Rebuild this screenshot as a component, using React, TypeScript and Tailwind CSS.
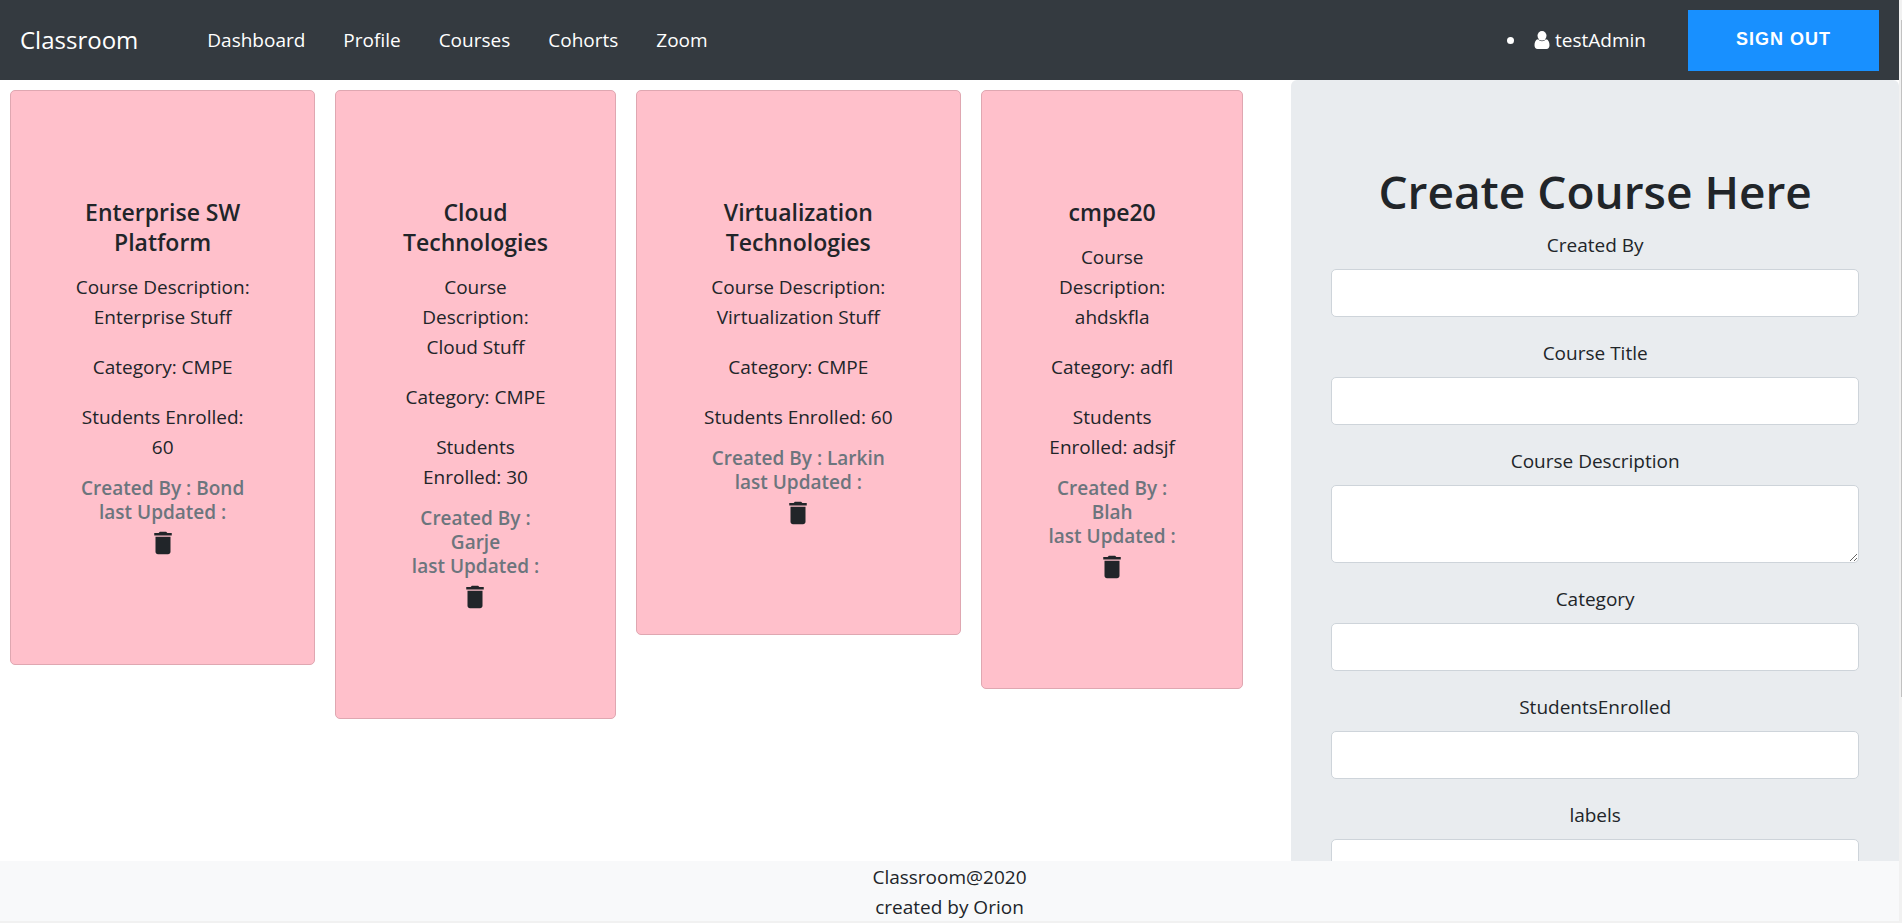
import React from "react";
import { MdDelete } from "react-icons/md";

type Course = {
  title: string;
  description: string;
  category: string;
  enrolled: string;
  createdBy: string;
};

const courses: Course[] = [
  { title: "Enterprise SW Platform", description: "Enterprise Stuff", category: "CMPE", enrolled: "60", createdBy: "Bond" },
  { title: "Cloud Technologies", description: "Cloud Stuff", category: "CMPE", enrolled: "30", createdBy: "Garje" },
  { title: "Virtualization Technologies", description: "Virtualization Stuff", category: "CMPE", enrolled: "60", createdBy: "Larkin" },
  { title: "cmpe20", description: "ahdskfla", category: "adfl", enrolled: "adsjf", createdBy: "Blah" },
];

const links = ["Dashboard", "Profile", "Courses", "Cohorts", "Zoom"];

const fields: { id: string; label: string; multiline?: boolean }[] = [
  { id: "createdBy", label: "Created By" },
  { id: "title", label: "Course Title" },
  { id: "description", label: "Course Description", multiline: true },
  { id: "category", label: "Category" },
  { id: "enrolled", label: "StudentsEnrolled" },
  { id: "labels", label: "labels" },
];

function UserIcon() {
  return (
    <svg viewBox="0 0 16 18" className="h-[18px] w-4 fill-white" aria-hidden="true">
      <ellipse cx="8" cy="4.8" rx="4.5" ry="4.8" />
      <path d="M4.1 8.2C1.6 8.5.5 11 .5 14.2.5 16.6 1.7 18 3.6 18h8.8c1.9 0 3.1-1.4 3.1-3.8 0-3.2-1.1-5.7-3.6-6A5.2 5.2 0 0 1 8 10.2a5.2 5.2 0 0 1-3.9-2z" />
    </svg>
  );
}

function NavBar() {
  return (
    <nav className="flex h-20 shrink-0 items-center bg-[#343a40] px-5 text-white">
      <a href="#home" className="mr-[69px] text-[24px] leading-[30px]">
        Classroom
      </a>
      <ul className="flex gap-[38px]">
        {links.map((name) => (
          <li key={name}>
            <a href={"#" + name.toLowerCase()}>{name}</a>
          </li>
        ))}
      </ul>
      <div className="ml-auto flex items-center">
        <span className="mr-5 size-[7px] rounded-full bg-white" />
        <a href="#account" className="mr-[42px] flex items-center gap-[5px]">
          <UserIcon />
          testAdmin
        </a>
        <button
          type="button"
          className="h-[61px] w-[191px] bg-[#1890ff] pb-[3px] font-['Liberation_Sans',Arial,sans-serif] text-[18px] font-bold tracking-[1px]"
        >
          SIGN OUT
        </button>
      </div>
    </nav>
  );
}

function CourseCard({ course }: { course: Course }) {
  return (
    <article className="rounded-[5px] border border-[#dfa7b1] bg-[#ffc0cb] px-[60px] py-[106px] text-center">
      <h2 className="mb-[15px] text-[23px] leading-[30px] font-semibold">{course.title}</h2>
      <p className="mb-5">
        Course Description: <br />
        {course.description}
      </p>
      <p className="mb-5">{`Category: ${course.category}`}</p>
      <p className="mb-[14px]">{`Students Enrolled: ${course.enrolled}`}</p>
      <h3 className="leading-6 font-semibold text-[#6c757d]">
        {`Created By : ${course.createdBy}`}
        <br />
        last Updated :
      </h3>
      <button type="button" aria-label={"Delete " + course.title} className="mx-auto mt-1 block">
        <MdDelete size={30} />
      </button>
    </article>
  );
}

function CourseForm() {
  const control = "block w-full rounded-[5px] border border-[#ced4da] bg-white px-[15px]";
  return (
    <form className="rounded-t-md bg-[#e9ecef] px-10 pt-[81px] pb-20 text-center">
      <h1 className="mb-[9px] text-[46px] leading-[60px] font-semibold whitespace-nowrap">Create Course Here</h1>
      {fields.map((field) => (
        <div key={field.id} className="mb-[21px]">
          <label htmlFor={field.id} className="mb-[9px] block">
            {field.label}
          </label>
          {field.multiline ? (
            <textarea id={field.id} rows={2} className={control + " h-[78px] resize-y"} />
          ) : (
            <input id={field.id} type="text" className={control + " h-[48px]"} />
          )}
        </div>
      ))}
    </form>
  );
}

export default function App() {
  return (
    <div className="flex h-screen bg-[#f1f1f1] font-['Open_Sans','Noto_Sans',sans-serif] text-[19px] leading-[30px] text-[#212529]">
      <div className="flex min-w-0 flex-1 flex-col pb-[2px]">
        <NavBar />
        <main className="grid min-h-0 flex-1 grid-cols-[68fr_32fr] overflow-y-auto bg-white [scrollbar-width:none]">
          <section className="grid grid-cols-[305fr_280fr_325fr_262fr] items-start gap-5 pt-[10px] pr-12 pl-[10px]">
            {courses.map((course) => (
              <CourseCard key={course.title} course={course} />
            ))}
          </section>
          <CourseForm />
        </main>
        <footer className="h-[60px] shrink-0 bg-[#f8f9fa] pt-[1px] text-center">
          <p>Classroom@2020</p>
          <p>created by Orion</p>
        </footer>
      </div>
      <div className="flex w-[3px] justify-end pt-5">
        <div className="h-3/4 w-px bg-[#c1c1c1]" />
      </div>
    </div>
  );
}
